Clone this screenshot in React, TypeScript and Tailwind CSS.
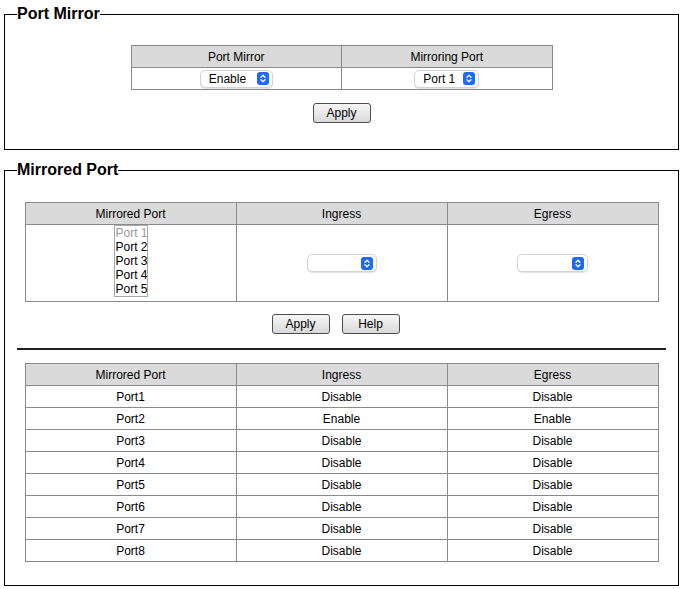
import React from 'react';

const Chevrons: React.FC = () => (
  <svg width="6" height="9" viewBox="0 0 6 9" fill="none" stroke="white" strokeWidth="1.3" strokeLinecap="round" strokeLinejoin="round">
    <path d="M1 3.2 L3 1.2 L5 3.2" />
    <path d="M1 5.8 L3 7.8 L5 5.8" />
  </svg>
);

const MacSelect: React.FC<{ label?: string; width: string }> = ({ label, width }) => (
  <div
    className={`inline-flex h-[18px] items-center justify-between rounded-[5px] border border-[#d4d4d4] bg-white pl-[8px] pr-[3px] align-middle text-[12px] leading-none shadow-[0_1px_1px_rgba(0,0,0,0.12)] ${width}`}
  >
    <span>{label ?? ''}</span>
    <span className="flex h-[13px] w-[12px] items-center justify-center rounded-[3px] bg-[#1e6bf3]">
      <Chevrons />
    </span>
  </div>
);

const MacButton: React.FC<{ children: React.ReactNode }> = ({ children }) => (
  <button className="h-[20px] w-[58px] rounded-[3px] border border-[#4d4d4d] bg-gradient-to-b from-[#f7f7f7] to-[#d9d9d9] text-[12px] leading-none text-black">
    {children}
  </button>
);

const th = 'h-[22px] border border-[#8a8a8a] bg-[#dadada] p-0 text-center font-normal';
const td = 'h-[22px] border border-[#8a8a8a] p-0 text-center';

const rows = [
  { port: 'Port1', ingress: 'Disable', egress: 'Disable' },
  { port: 'Port2', ingress: 'Enable', egress: 'Enable' },
  { port: 'Port3', ingress: 'Disable', egress: 'Disable' },
  { port: 'Port4', ingress: 'Disable', egress: 'Disable' },
  { port: 'Port5', ingress: 'Disable', egress: 'Disable' },
  { port: 'Port6', ingress: 'Disable', egress: 'Disable' },
  { port: 'Port7', ingress: 'Disable', egress: 'Disable' },
  { port: 'Port8', ingress: 'Disable', egress: 'Disable' },
];

const App: React.FC = () => {
  return (
    <div className="min-h-screen bg-white px-[4px] pt-[5px] font-['Liberation_Sans',Arial,sans-serif] text-[12px] text-black">
      {/* Port Mirror */}
      <fieldset className="w-[675px] border border-black px-3 pb-[26px]">
        <legend className="text-[16px] font-bold leading-[18px]">Port Mirror</legend>
        <table className="mx-auto mt-[22px] w-[422px] table-fixed border-collapse">
          <thead>
            <tr>
              <th className={th}>Port Mirror</th>
              <th className={th}>Mirroring Port</th>
            </tr>
          </thead>
          <tbody>
            <tr>
              <td className={td}>
                <MacSelect label="Enable" width="w-[73px]" />
              </td>
              <td className={td}>
                <MacSelect label="Port 1" width="w-[65px]" />
              </td>
            </tr>
          </tbody>
        </table>
        <div className="mt-[13px] flex justify-center">
          <MacButton>Apply</MacButton>
        </div>
      </fieldset>

      {/* Mirrored Port */}
      <fieldset className="mt-[11px] w-[675px] border border-black px-3 pb-[23px]">
        <legend className="text-[16px] font-bold leading-[18px]">Mirrored Port</legend>
        <table className="mx-auto mt-[23px] w-[634px] table-fixed border-collapse">
          <thead>
            <tr>
              <th className={th}>Mirrored Port</th>
              <th className={th}>Ingress</th>
              <th className={th}>Egress</th>
            </tr>
          </thead>
          <tbody>
            <tr>
              <td className="border border-[#8a8a8a] px-0 pt-0 pb-[4px] text-center align-top">
                <div className="mx-auto h-[72px] w-[34px] overflow-hidden whitespace-nowrap border border-[#a8a8a8] text-left text-[12px] leading-[14px]">
                  <div className="pl-px text-[#9a9a9a]">Port 1</div>
                  <div className="pl-px">Port 2</div>
                  <div className="pl-px">Port 3</div>
                  <div className="pl-px">Port 4</div>
                  <div className="pl-px">Port 5</div>
                </div>
              </td>
              <td className={td}>
                <MacSelect width="w-[70px]" />
              </td>
              <td className={td}>
                <MacSelect width="w-[71px]" />
              </td>
            </tr>
          </tbody>
        </table>
        <div className="mt-[12px] flex justify-center gap-3 pr-3">
          <MacButton>Apply</MacButton>
          <MacButton>Help</MacButton>
        </div>
        <hr className="mt-[14px] border-t-2 border-[#222]" />
        <table className="mx-auto mt-[13px] w-[634px] table-fixed border-collapse">
          <thead>
            <tr>
              <th className={th}>Mirrored Port</th>
              <th className={th}>Ingress</th>
              <th className={th}>Egress</th>
            </tr>
          </thead>
          <tbody>
            {rows.map((r) => (
              <tr key={r.port}>
                <td className={td}>{r.port}</td>
                <td className={td}>{r.ingress}</td>
                <td className={td}>{r.egress}</td>
              </tr>
            ))}
          </tbody>
        </table>
      </fieldset>
    </div>
  );
};

export default App;
